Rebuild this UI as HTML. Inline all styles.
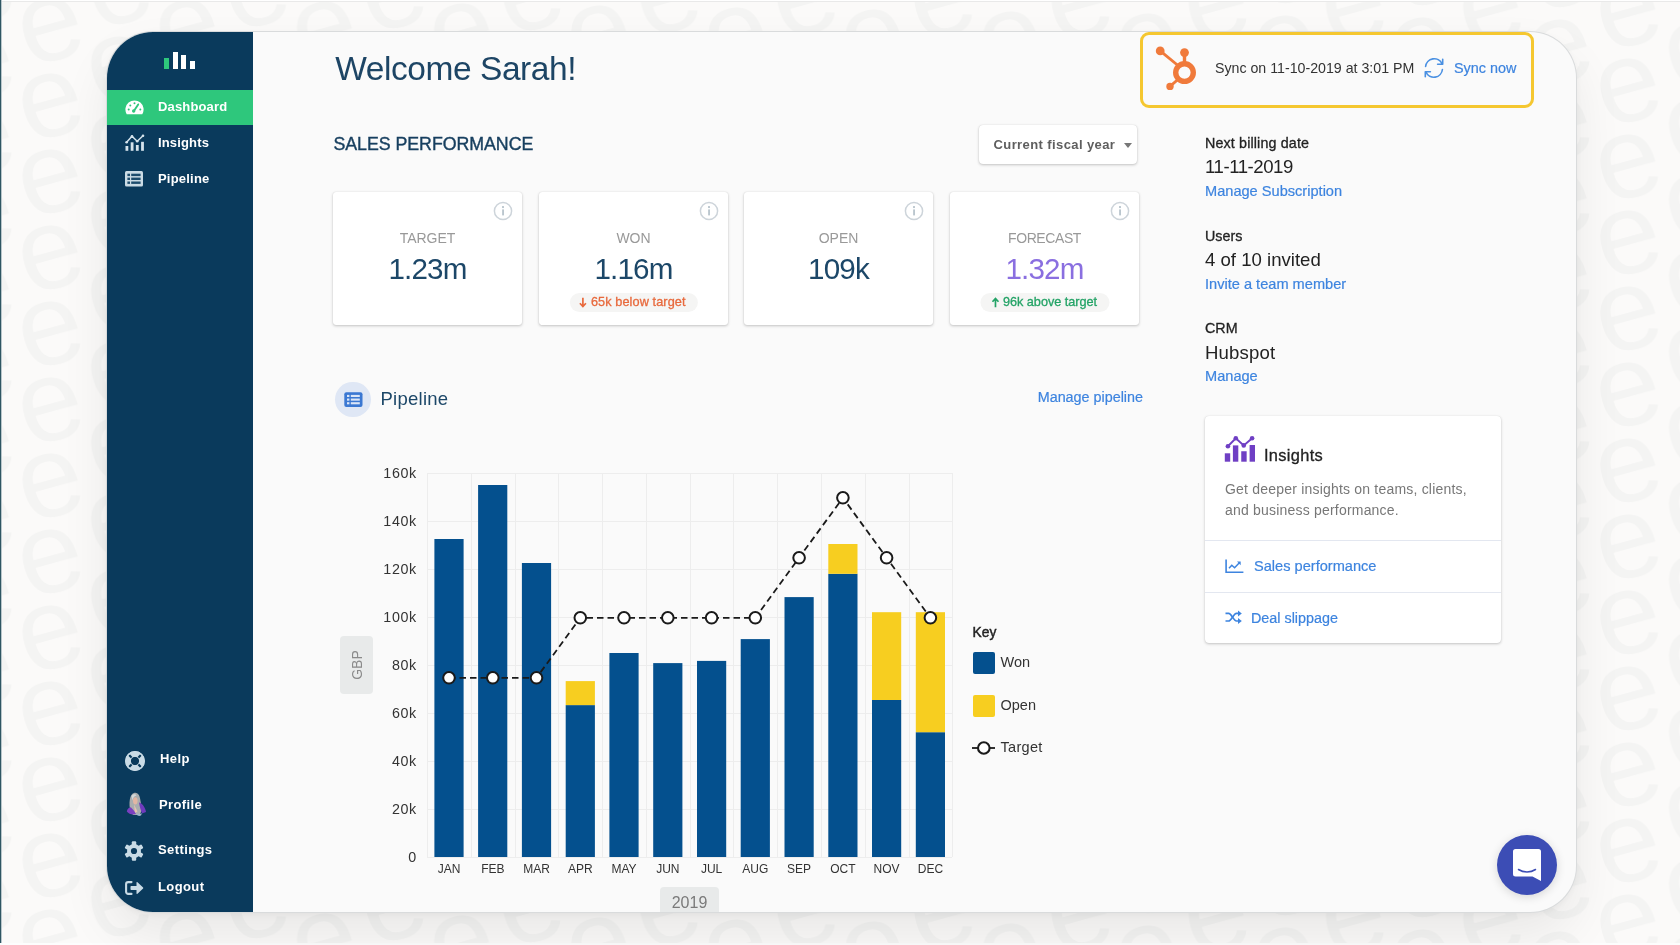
<!DOCTYPE html>
<html>
<head>
<meta charset="utf-8">
<title>Dashboard</title>
<style>
*{box-sizing:border-box;margin:0;padding:0}
html,body{width:1680px;height:945px;overflow:hidden}
body{font-family:"Liberation Sans",sans-serif;background:#fbfaf9;position:relative;color:#222}
.abs{position:absolute}
.t{position:absolute;white-space:nowrap;line-height:1}
#bgpat{position:absolute;left:0;top:0;width:1680px;height:945px}
#edgeL{position:absolute;left:0;top:0;width:2px;height:945px;background:linear-gradient(90deg,#2f5663 0,#2f5663 1.500px,#b9c6cb 1.500px,#b9c6cb 2px)}
#edgeT{position:absolute;left:0;top:0;width:1680px;height:2px;background:linear-gradient(180deg,#fff 0,#fff 1px,#e9e9e9 1px,#e9e9e9 2px)}
#panel{position:absolute;left:107px;top:32px;width:1469px;height:880px;border-radius:46px;background:#fafafa;overflow:hidden;box-shadow:0 0 0 1px #d9dbdc,0 2px 8px rgba(0,0,0,.06),0 24px 50px rgba(0,0,0,.075);will-change:transform}
#side{position:absolute;left:0;top:0;width:146px;height:880px;background:#0a3a5c}
.nav{position:absolute;left:0;width:146px;height:36px;color:#fff;font-weight:bold;font-size:13px;letter-spacing:.4px}
.nav.on{background:#2ec77c}
.nav span{position:absolute;left:51px;top:11px;line-height:14px;white-space:nowrap}
.nav svg{position:absolute}
.link{color:#3d84df;-webkit-text-stroke:.2px #3d84df}
.card{position:absolute;top:160px;width:189px;height:133px;background:#fff;border-radius:3px;box-shadow:0 1px 3px rgba(0,0,0,.22),0 0 1px rgba(0,0,0,.15)}
.card .lb{position:absolute;left:0;width:100%;text-align:center;top:38px;font-size:14px;color:#999;line-height:16px}
.card .vl{position:absolute;left:0;width:100%;text-align:center;top:60.600px;font-size:29.600px;color:#1c4768;line-height:32px;letter-spacing:-.8px}
.card .info{position:absolute;left:159.500px;top:9px;width:20px;height:20px}
.rc1{font-size:14.300px;color:#222;-webkit-text-stroke:.3px #222}
.rc2{font-size:18.600px;color:#222}
.rc3{font-size:14.600px}
.med{-webkit-text-stroke:.35px currentColor}
.pill{position:absolute;left:50%;transform:translateX(-50%);top:100.500px;height:19.500px;border-radius:10px;background:#f5f5f4;font-size:12.700px;letter-spacing:.1px;line-height:19.500px;padding:0 12px 0 21.500px;white-space:nowrap;-webkit-text-stroke:.3px currentColor}
.pill svg{position:absolute;left:9.500px;top:4.500px}
</style>
</head>
<body>
<svg id="bgpat" width="1680" height="945">
  <defs>
    <text id="eg" font-family="Liberation Sans, sans-serif" font-size="116" fill="#f4f4f3" text-anchor="middle" transform="rotate(-16)" x="0" y="30">e</text>
    <pattern id="ep" x="51" y="29.300" width="137.2" height="76" patternUnits="userSpaceOnUse" patternTransform="skewY(0.835)">
      <use href="#eg" x="-137.2" y="-76"/><use href="#eg" x="-137.2" y="0"/><use href="#eg" x="-137.2" y="76"/><use href="#eg" x="0" y="-76"/><use href="#eg" x="0" y="0"/><use href="#eg" x="0" y="76"/><use href="#eg" x="137.2" y="-76"/><use href="#eg" x="137.2" y="0"/><use href="#eg" x="137.2" y="76"/><use href="#eg" x="-68.6" y="-38"/><use href="#eg" x="-68.6" y="38"/><use href="#eg" x="-68.6" y="114"/><use href="#eg" x="68.6" y="-38"/><use href="#eg" x="68.6" y="38"/><use href="#eg" x="68.6" y="114"/><use href="#eg" x="205.8" y="-38"/><use href="#eg" x="205.8" y="38"/><use href="#eg" x="205.8" y="114"/>
    </pattern>
  </defs>
  <rect width="1680" height="945" fill="url(#ep)"/>
</svg>
<div id="edgeT"></div>
<div id="edgeL"></div>
<div class="abs" style="left:0;top:943px;width:1680px;height:2px;background:#fdfdfd"></div>

<div id="panel">
  <div id="side">
    <!-- logo -->
    <div class="abs" style="left:57px;top:26px;width:5px;height:11px;background:#2ec77c"></div>
    <div class="abs" style="left:65.5px;top:20px;width:5px;height:17px;background:#fff"></div>
    <div class="abs" style="left:74px;top:23px;width:5px;height:14px;background:#fff"></div>
    <div class="abs" style="left:82.5px;top:29px;width:5px;height:8px;background:#fff"></div>

    <div class="nav on" style="top:58px;height:34.500px"><span style="top:10px;letter-spacing:.15px">Dashboard</span></div>
<svg class="abs" style="left:17.5px;top:68px" width="19" height="15" viewBox="0 0 19 15"><path d="M1.700 14.200A9.100 9.100 0 1 1 17.300 14.200z" fill="#fff"/><g fill="#2ec77c"><circle cx="3.700" cy="9.600" r="1"/><circle cx="5.300" cy="5.400" r="1"/><circle cx="9.500" cy="3.300" r="1"/><circle cx="15.300" cy="9.600" r="1"/></g><path d="M8.700 11.200L13.200 4.400" stroke="#2ec77c" stroke-width="1.900" stroke-linecap="round"/><circle cx="8.700" cy="11" r="1.700" fill="#2ec77c"/></svg><svg class="abs" style="left:17.500px;top:101.500px" width="20" height="19" viewBox="0 0 20 19"><g fill="#d5e3ec"><rect x="0.500" y="12" width="2.800" height="4.800"/><rect x="5.700" y="8.300" width="2.800" height="8.500"/><rect x="10.900" y="11" width="2.800" height="5.800"/><rect x="16.100" y="7.800" width="2.800" height="9"/></g><path d="M1.600 8.300L7 2.300L12.200 7.300L18 1.800" stroke="#d5e3ec" stroke-width="1.500" fill="none" stroke-linejoin="round" stroke-linecap="round"/><g fill="#d5e3ec"><circle cx="1.600" cy="8.300" r="1.300"/><circle cx="7" cy="2.300" r="1.300"/><circle cx="12.200" cy="7.300" r="1.300"/><circle cx="18" cy="1.800" r="1.300"/></g></svg><svg class="abs" style="left:18px;top:138.500px" width="18" height="16" viewBox="0 0 18 16"><rect x="0" y="0" width="18" height="15.600" rx="1.500" fill="#cbdbe5"/><g fill="#1d4c6d"><rect x="2.400" y="2.700" width="2.600" height="2.400"/><rect x="6.200" y="2.700" width="9.400" height="2.400"/><rect x="2.400" y="6.600" width="2.600" height="2.400"/><rect x="6.200" y="6.600" width="9.400" height="2.400"/><rect x="2.400" y="10.500" width="2.600" height="2.400"/><rect x="6.200" y="10.500" width="9.400" height="2.400"/></g></svg><svg class="abs" style="left:17.800px;top:719.200px" width="20" height="20" viewBox="0 0 21 21"><circle cx="10.500" cy="10.500" r="7.400" fill="none" stroke="#c9dbe6" stroke-width="6"/><g stroke="#0a3a5c" stroke-width="2.300"><path d="M4.300 4.300L7.600 7.600M16.700 4.300L13.400 7.600M4.300 16.700L7.600 13.400M16.700 16.700L13.400 13.400"/></g><circle cx="10.500" cy="10.500" r="9.700" fill="none" stroke="#c9dbe6" stroke-width="1.400"/><circle cx="10.500" cy="10.500" r="4.900" fill="none" stroke="#c9dbe6" stroke-width="1"/></svg><svg class="abs" style="left:19px;top:760px" width="22" height="25" viewBox="0 0 22 25"><path d="M4.500 19C2.500 12 3.500 2 8 1c4.500-1 6 3.500 6.500 8 .3 3 1.500 5 2 8l-3 6H7z" fill="#a9adaf"/><path d="M5.500 4c1-2 4-2.500 5-.5-2 .5-3.500 2-4 5z" fill="#d5d8d9"/><ellipse cx="9.300" cy="8.800" rx="2.300" ry="3.600" fill="#e2b6a4"/><path d="M8 12.500l3.500 7-2.500 1.500z" fill="#e9c1b0"/><path d="M0.800 19.500c.5-2.500 2-4 4-4.200l3 3.200 2.200 3.500c-3 1-7 .5-9.200-2.500z" fill="#7a3fc0"/><path d="M13 10.500c3 .5 6.500 5 7 9.500l-4 1.500c-1-3-2.500-7-3-11z" fill="#6f3bbd"/><path d="M10 21.500c2 .8 4 .8 6-.2l-1 2.200c-1.500.8-3.500.8-5-2z" fill="#9db3c9"/></svg><svg class="abs" style="left:17px;top:808.500px" width="20" height="20" viewBox="0 0 20 20"><g fill="#c9dbe6"><circle cx="10" cy="10" r="7"/><g id="tt"><rect x="7.800" y="0.300" width="4.400" height="19.400" rx="1"/></g><rect x="7.800" y="0.300" width="4.400" height="19.400" rx="1" transform="rotate(60 10 10)"/><rect x="7.800" y="0.300" width="4.400" height="19.400" rx="1" transform="rotate(120 10 10)"/></g><circle cx="10" cy="10" r="3.100" fill="#0a3a5c"/></svg><svg class="abs" style="left:17.500px;top:849px" width="19" height="14" viewBox="0 0 19 14"><path d="M6.500 1.100H3.200A2.100 2.100 0 0 0 1.100 3.200v7.600a2.100 2.100 0 0 0 2.100 2.100h3.300" fill="none" stroke="#c9dbe6" stroke-width="2.100" stroke-linecap="round"/><path d="M6.200 5h5.300V1.600a.6.600 0 0 1 1-.4l5.600 5.400a.6.600 0 0 1 0 .800l-5.600 5.400a.6.600 0 0 1-1-.4V9H6.200a.700.700 0 0 1-.700-.700V5.700a.700.700 0 0 1 .700-.700z" fill="#c9dbe6"/></svg>
    <div class="nav" style="top:93px"><span style="letter-spacing:.15px">Insights</span></div>
    <div class="nav" style="top:129px"><span style="letter-spacing:.2px">Pipeline</span></div>

    <div class="nav" style="top:709px"><span style="left:53px">Help</span></div>
    <div class="nav" style="top:755px"><span style="left:52px">Profile</span></div>
    <div class="nav" style="top:800px"><span>Settings</span></div>
    <div class="nav" style="top:837px"><span>Logout</span></div>
  </div>

  <!-- MAIN -->
  <div class="t" id="welcome" style="left:228.300px;top:19.500px;font-size:33.500px;color:#1d4565;letter-spacing:-.45px">Welcome Sarah!</div>
  <div class="t" id="salesperf" style="left:226.500px;top:103.500px;font-size:17.800px;color:#173f5f;letter-spacing:-.05px;-webkit-text-stroke:.4px #173f5f">SALES PERFORMANCE</div>

  <!-- dropdown -->
  <div class="abs" style="left:872px;top:93px;width:158px;height:39px;background:#fff;border-radius:4px;box-shadow:0 1px 3px rgba(0,0,0,.22),0 0 1px rgba(0,0,0,.15)">
    <div class="t" style="left:14.500px;top:13px;font-size:13px;font-weight:bold;color:#5e5e5e;letter-spacing:.4px">Current fiscal year</div>
    <div class="abs" style="left:144.700px;top:17.500px;width:0;height:0;border-left:4.5px solid transparent;border-right:4.5px solid transparent;border-top:5px solid #777"></div>
  </div>

  <!-- cards -->
  <div class="card" style="left:226px"><svg class="info" viewBox="0 0 20 20"><circle cx="10" cy="10" r="8.600" fill="none" stroke="#cdd4da" stroke-width="1.500"/><circle cx="10" cy="6.100" r="1.100" fill="#b3c0c9"/><rect x="9.200" y="8.400" width="1.700" height="6" fill="#b3c0c9"/></svg><div class="lb">TARGET</div><div class="vl">1.23m</div></div>
  <div class="card" style="left:432px"><svg class="info" viewBox="0 0 20 20"><circle cx="10" cy="10" r="8.600" fill="none" stroke="#cdd4da" stroke-width="1.500"/><circle cx="10" cy="6.100" r="1.100" fill="#b3c0c9"/><rect x="9.200" y="8.400" width="1.700" height="6" fill="#b3c0c9"/></svg><div class="lb">WON</div><div class="vl">1.16m</div><div class="pill" style="color:#e8693c"><svg width="8" height="11" viewBox="0 0 8 11"><path d="M4 0.800V9M1 6.200L4 9.500L7 6.200" fill="none" stroke="#e8693c" stroke-width="1.700"/></svg>65k below target</div></div>
  <div class="card" style="left:637px"><svg class="info" viewBox="0 0 20 20"><circle cx="10" cy="10" r="8.600" fill="none" stroke="#cdd4da" stroke-width="1.500"/><circle cx="10" cy="6.100" r="1.100" fill="#b3c0c9"/><rect x="9.200" y="8.400" width="1.700" height="6" fill="#b3c0c9"/></svg><div class="lb">OPEN</div><div class="vl">109k</div></div>
  <div class="card" style="left:843px"><svg class="info" viewBox="0 0 20 20"><circle cx="10" cy="10" r="8.600" fill="none" stroke="#cdd4da" stroke-width="1.500"/><circle cx="10" cy="6.100" r="1.100" fill="#b3c0c9"/><rect x="9.200" y="8.400" width="1.700" height="6" fill="#b3c0c9"/></svg><div class="lb" style="letter-spacing:-.4px">FORECAST</div><div class="vl" style="color:#8a6fe0">1.32m</div><div class="pill" style="color:#23a366;letter-spacing:-.03px;padding-left:23px"><svg style="left:11.500px" width="8" height="11" viewBox="0 0 8 11"><path d="M4 10.200V2M1 4.800L4 1.500L7 4.800" fill="none" stroke="#23a366" stroke-width="1.700"/></svg>96k above target</div></div>

  <!-- pipeline header -->
  <div class="abs" style="left:228px;top:349.800px;width:35.500px;height:35px;border-radius:18px;background:#dfe7f5"></div>
  <svg class="abs" style="left:236.800px;top:359.700px" width="19" height="15.400" viewBox="0 0 19 16" preserveAspectRatio="none"><rect x="0.300" y="0.300" width="18.200" height="15.200" rx="2" fill="#3b78d2"/><g fill="#dbe6f7"><rect x="3" y="3" width="2.400" height="2.200"/><rect x="6.800" y="3" width="9" height="2.200"/><rect x="3" y="6.800" width="2.400" height="2.200"/><rect x="6.800" y="6.800" width="9" height="2.200"/><rect x="3" y="10.600" width="2.400" height="2.200"/><rect x="6.800" y="10.600" width="9" height="2.200"/></g></svg>
  <div class="t" style="left:273.500px;top:358.300px;font-size:18.500px;letter-spacing:.25px;color:#1c4768">Pipeline</div>
  <div class="t link" style="right:433px;top:357.500px;font-size:14.350px">Manage pipeline</div>

  <!-- chart placeholder -->
  <svg id="chart" class="abs" style="left:0;top:0" width="1469" height="880">
<g stroke="#ededed" stroke-width="1" shape-rendering="crispEdges">
<line x1="320.1" y1="825.5" x2="845.3" y2="825.5"/>
<line x1="320.1" y1="777.5" x2="845.3" y2="777.5"/>
<line x1="320.1" y1="729.5" x2="845.3" y2="729.5"/>
<line x1="320.1" y1="681.5" x2="845.3" y2="681.5"/>
<line x1="320.1" y1="633.5" x2="845.3" y2="633.5"/>
<line x1="320.1" y1="585.5" x2="845.3" y2="585.5"/>
<line x1="320.1" y1="537.5" x2="845.3" y2="537.5"/>
<line x1="320.1" y1="489.5" x2="845.3" y2="489.5"/>
<line x1="320.1" y1="441.5" x2="845.3" y2="441.5"/>
<line x1="320.5" y1="441.0" x2="320.5" y2="825.0"/>
<line x1="364.5" y1="441.0" x2="364.5" y2="825.0"/>
<line x1="408.5" y1="441.0" x2="408.5" y2="825.0"/>
<line x1="451.5" y1="441.0" x2="451.5" y2="825.0"/>
<line x1="495.5" y1="441.0" x2="495.5" y2="825.0"/>
<line x1="539.5" y1="441.0" x2="539.5" y2="825.0"/>
<line x1="583.5" y1="441.0" x2="583.5" y2="825.0"/>
<line x1="626.5" y1="441.0" x2="626.5" y2="825.0"/>
<line x1="670.5" y1="441.0" x2="670.5" y2="825.0"/>
<line x1="714.5" y1="441.0" x2="714.5" y2="825.0"/>
<line x1="758.5" y1="441.0" x2="758.5" y2="825.0"/>
<line x1="802.5" y1="441.0" x2="802.5" y2="825.0"/>
<line x1="845.5" y1="441.0" x2="845.5" y2="825.0"/>
</g>
<g>
<rect x="327.4" y="507.0" width="29.2" height="318.0" fill="#04508e"/>
<rect x="371.1" y="453.0" width="29.2" height="372.0" fill="#04508e"/>
<rect x="414.9" y="531.0" width="29.2" height="294.0" fill="#04508e"/>
<rect x="458.7" y="673.1" width="29.2" height="151.9" fill="#04508e"/>
<rect x="458.7" y="649.1" width="29.2" height="24.0" fill="#f7ce20"/>
<rect x="502.4" y="621.0" width="29.2" height="204.0" fill="#04508e"/>
<rect x="546.2" y="631.1" width="29.2" height="193.9" fill="#04508e"/>
<rect x="590.0" y="628.9" width="29.2" height="196.1" fill="#04508e"/>
<rect x="633.7" y="607.1" width="29.2" height="217.9" fill="#04508e"/>
<rect x="677.5" y="565.1" width="29.2" height="259.9" fill="#04508e"/>
<rect x="721.3" y="541.8" width="29.2" height="283.2" fill="#04508e"/>
<rect x="721.3" y="512.0" width="29.2" height="29.8" fill="#f7ce20"/>
<rect x="765.0" y="668.0" width="29.2" height="157.0" fill="#04508e"/>
<rect x="765.0" y="580.2" width="29.2" height="87.8" fill="#f7ce20"/>
<rect x="808.8" y="700.2" width="29.2" height="124.8" fill="#04508e"/>
<rect x="808.8" y="580.2" width="29.2" height="120.0" fill="#f7ce20"/>
</g>
<polyline points="342.0,645.8 385.8,645.8 429.5,645.8 473.3,585.8 517.0,585.8 560.8,585.8 604.6,585.8 648.3,585.8 692.1,525.8 735.9,465.8 779.6,525.8 823.4,585.8" fill="none" stroke="#1a1a1a" stroke-width="1.8" stroke-dasharray="6.5 4"/>
<circle cx="342.0" cy="645.8" r="5.8" fill="#fff" stroke="#1a1a1a" stroke-width="2"/>
<circle cx="385.8" cy="645.8" r="5.8" fill="#fff" stroke="#1a1a1a" stroke-width="2"/>
<circle cx="429.5" cy="645.8" r="5.8" fill="#fff" stroke="#1a1a1a" stroke-width="2"/>
<circle cx="473.3" cy="585.8" r="5.8" fill="#fff" stroke="#1a1a1a" stroke-width="2"/>
<circle cx="517.0" cy="585.8" r="5.8" fill="#fff" stroke="#1a1a1a" stroke-width="2"/>
<circle cx="560.8" cy="585.8" r="5.8" fill="#fff" stroke="#1a1a1a" stroke-width="2"/>
<circle cx="604.6" cy="585.8" r="5.8" fill="#fff" stroke="#1a1a1a" stroke-width="2"/>
<circle cx="648.3" cy="585.8" r="5.8" fill="#fff" stroke="#1a1a1a" stroke-width="2"/>
<circle cx="692.1" cy="525.8" r="5.8" fill="#fff" stroke="#1a1a1a" stroke-width="2"/>
<circle cx="735.9" cy="465.8" r="5.8" fill="#fff" stroke="#1a1a1a" stroke-width="2"/>
<circle cx="779.6" cy="525.8" r="5.8" fill="#fff" stroke="#1a1a1a" stroke-width="2"/>
<circle cx="823.4" cy="585.8" r="5.8" fill="#fff" stroke="#1a1a1a" stroke-width="2"/>
<g font-family="Liberation Sans, sans-serif" font-size="14.3" letter-spacing="0.62" fill="#333" text-anchor="end">
<text x="309.8" y="830.0">0</text>
<text x="309.8" y="782.0">20k</text>
<text x="309.8" y="734.0">40k</text>
<text x="309.8" y="686.0">60k</text>
<text x="309.8" y="638.0">80k</text>
<text x="309.8" y="590.0">100k</text>
<text x="309.8" y="542.0">120k</text>
<text x="309.8" y="494.0">140k</text>
<text x="309.8" y="446.0">160k</text>
</g>
<g font-family="Liberation Sans, sans-serif" font-size="12" fill="#333" text-anchor="middle">
<text x="342.0" y="840.5">JAN</text>
<text x="385.8" y="840.5">FEB</text>
<text x="429.5" y="840.5">MAR</text>
<text x="473.3" y="840.5">APR</text>
<text x="517.0" y="840.5">MAY</text>
<text x="560.8" y="840.5">JUN</text>
<text x="604.6" y="840.5">JUL</text>
<text x="648.3" y="840.5">AUG</text>
<text x="692.1" y="840.5">SEP</text>
<text x="735.9" y="840.5">OCT</text>
<text x="779.6" y="840.5">NOV</text>
<text x="823.4" y="840.5">DEC</text>
</g>
</svg>

  <!-- axis tags -->
  <div class="abs" style="left:233px;top:604px;width:33px;height:58px;border-radius:4px;background:#e8eaea">
    <div class="t" style="left:16.5px;top:29px;font-size:14px;color:#8a8a8a;transform:translate(-50%,-50%) rotate(-90deg)">GBP</div>
  </div>
  <div class="abs" style="left:553px;top:855px;width:59px;height:30px;border-radius:4px;background:#e8eaea">
    <div class="t" style="left:0;width:59px;text-align:center;top:8px;font-size:16px;color:#7a7a7a">2019</div>
  </div>

  <!-- legend -->
  <div class="t" style="left:865.500px;top:593.700px;font-size:13.800px;color:#222;-webkit-text-stroke:.45px #222">Key</div>
  <div class="abs" style="left:866px;top:620px;width:22px;height:21.500px;border-radius:2px;background:#04508e"></div>
  <div class="t" style="left:893.500px;top:623px;font-size:14.500px;color:#333">Won</div>
  <div class="abs" style="left:866px;top:662.500px;width:22px;height:22px;border-radius:2px;background:#f7ce20"></div>
  <div class="t" style="left:893.500px;top:666px;font-size:14.500px;color:#333">Open</div>
  <svg class="abs" style="left:863px;top:705.500px" width="28" height="20"><line x1="2" y1="10" x2="25" y2="10" stroke="#1a1a1a" stroke-width="1.800"/><circle cx="13.800" cy="10" r="5.800" fill="#fff" stroke="#1a1a1a" stroke-width="2.100"/></svg>
  <div class="t" style="left:893.500px;top:708px;font-size:14.500px;letter-spacing:.3px;color:#333">Target</div>

  <!-- sync box -->
  <div class="abs" style="left:1033px;top:0;width:394px;height:76px;border:3px solid #f5c730;border-radius:9px;background:#fafafa"></div>
  <svg class="abs" style="left:1045px;top:10px" width="50" height="54" viewBox="1152 42 50 54"><g stroke="#f07a3b" fill="none" stroke-linecap="round"><circle cx="1184.500" cy="72.600" r="8.800" stroke-width="5.400"/><path d="M1160.200 50.900L1178 65.500" stroke-width="2.900"/><path d="M1184.500 52.600V64" stroke-width="3.400"/><path d="M1170 86.400L1178.500 79" stroke-width="2.900"/></g><g fill="#f07a3b"><circle cx="1160.200" cy="50.900" r="4.400"/><circle cx="1184.500" cy="52.600" r="4.400"/><circle cx="1170" cy="86.400" r="3.700"/></g></svg><svg class="abs" style="left:1315px;top:24px" width="24" height="24" viewBox="0 0 24 24"><g fill="none" stroke="#4a90e2" stroke-width="1.600" stroke-linecap="round" stroke-linejoin="round"><path d="M3.600 10.500A8.600 8.600 0 0 1 20 7.800"/><path d="M20.700 3.200V8.300H15.600"/><path d="M20.400 13.500A8.600 8.600 0 0 1 4 16.200"/><path d="M3.300 20.800V15.700H8.400"/></g></svg>
  <div class="t" id="synctxt" style="left:1108px;top:29px;font-size:14.200px;color:#333">Sync on 11-10-2019 at 3:01 PM</div>
  <div class="t link" id="syncnow" style="left:1347px;top:29px;font-size:14.400px">Sync now</div>

  <!-- right column -->
  <div class="t rc1" style="left:1098px;top:104px;letter-spacing:.14px">Next billing date</div>
  <div class="t rc2" style="left:1098px;top:126.400px;letter-spacing:-.45px">11-11-2019</div>
  <div class="t rc3 link" style="left:1098px;top:152px">Manage Subscription</div>

  <div class="t rc1" style="left:1098px;top:197px">Users</div>
  <div class="t rc2" style="left:1098px;top:219px">4 of 10 invited</div>
  <div class="t rc3 link" style="left:1098px;top:245px">Invite a team member</div>

  <div class="t rc1" style="left:1098px;top:289px">CRM</div>
  <div class="t rc2" style="left:1098px;top:311.500px;letter-spacing:.15px">Hubspot</div>
  <div class="t rc3 link" style="left:1098px;top:337px">Manage</div>

  <!-- insights card -->
  <div class="abs" style="left:1098px;top:384px;width:296px;height:227px;background:#fff;border-radius:4px;box-shadow:0 1px 3px rgba(0,0,0,.22),0 0 1px rgba(0,0,0,.15)">
    <svg class="abs" style="left:18.600px;top:19px" width="32" height="28" viewBox="1224 435 32 28"><g fill="#6f3fc4"><rect x="1224.800" y="453.300" width="5.400" height="8.400"/><rect x="1232.900" y="445.400" width="5.400" height="16.300"/><rect x="1241.250" y="451.250" width="5.400" height="10.450"/><rect x="1249.600" y="445" width="5.400" height="16.700"/><circle cx="1227.900" cy="446.250" r="2.300"/><circle cx="1235.800" cy="438.300" r="2.300"/><circle cx="1243.750" cy="445.400" r="2.300"/><circle cx="1252.100" cy="438.300" r="2.300"/></g><path d="M1227.900 446.250L1235.800 438.300L1243.750 445.400L1252.100 438.300" stroke="#6f3fc4" stroke-width="1.900" fill="none"/></svg><svg class="abs" style="left:20px;top:142.700px" width="19" height="15" viewBox="0 0 19 15"><g fill="none" stroke="#3d84df" stroke-width="1.600"><path d="M1.100 0.500V13.300H18.400"/><path d="M4 9.300L6.800 6.200L9.600 8.700L14.600 3.500" stroke-width="1.500"/></g><path d="M12 2.600H15.700V6.300z" fill="#3d84df"/></svg><svg class="abs" style="left:19.500px;top:194px" width="18" height="15" viewBox="0 0 18 15"><g fill="none" stroke="#3d84df" stroke-width="1.700"><path d="M0.500 3.400H3.600C6.500 3.400 8.500 11 11.500 11H14"/><path d="M0.500 11H3.600C6.500 11 8.500 3.400 11.500 3.400H14"/></g><path d="M13 0.400L16.800 3.400L13 6.400z" fill="#3d84df"/><path d="M13 8L16.800 11L13 14z" fill="#3d84df"/></svg>
    <div class="t" style="left:59px;top:31px;font-size:16.400px;letter-spacing:.32px;color:#222;-webkit-text-stroke:.3px #222">Insights</div>
    <div class="t" style="left:20px;top:66px;font-size:14px;letter-spacing:.2px;color:#777">Get deeper insights on teams, clients,</div>
    <div class="t" style="left:20px;top:87px;font-size:14px;letter-spacing:.2px;color:#777">and business performance.</div>
    <div class="abs" style="left:0;top:124px;width:296px;height:1px;background:#e3e7f0"></div>
    <div class="t link" style="left:49px;top:143px;font-size:14.600px">Sales performance</div>
    <div class="abs" style="left:0;top:176px;width:296px;height:1px;background:#e3e7f0"></div>
    <div class="t link" style="left:46px;top:195px;font-size:14.350px">Deal slippage</div>
  </div>

  <!-- intercom -->
  <div class="abs" style="left:1390px;top:803px;width:60px;height:60px;border-radius:30px;background:#3c4db5;box-shadow:0 2px 10px rgba(0,0,0,.15)">
    <svg class="abs" style="left:15px;top:13px" width="30" height="34" viewBox="0 0 30 34"><path d="M3.5 1h23a2.5 2.5 0 0 1 2.500 2.500V33l-8.500-4.500H3.500A2.500 2.500 0 0 1 1 26V3.500A2.500 2.500 0 0 1 3.500 1z" fill="#fff"/><path d="M6.500 21.500c5 3.200 12 3.200 17 0" stroke="#3c4db5" stroke-width="1.500" fill="none" stroke-linecap="round"/></svg>
  </div>
</div>
</body>
</html>
